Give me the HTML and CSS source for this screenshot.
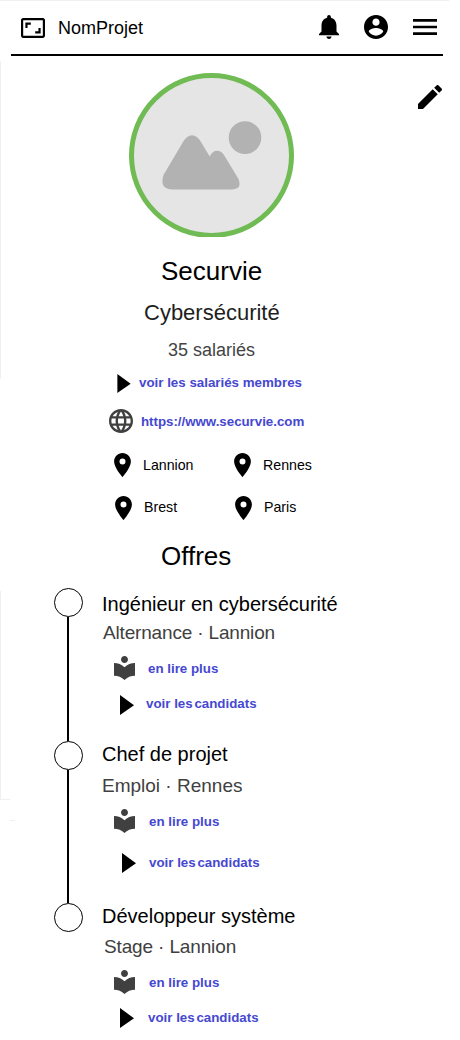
FILE: index.html
```html
<!DOCTYPE html>
<html lang="fr">
<head>
<meta charset="utf-8">
<title>NomProjet</title>
<link rel="stylesheet" href="styles.css">
</head>
<body>
<svg class="defs" width="0" height="0">
  <symbol id="pin" viewBox="5 2 14 20"><path d="M12 2C8.13 2 5 5.13 5 9c0 5.25 7 13 7 13s7-7.75 7-13c0-3.87-3.13-7-7-7zm0 9.500a2.500 2.500 0 0 1 0-5 2.500 2.500 0 0 1 0 5z"/></symbol>
  <symbol id="book" viewBox="3 2 18 20.550"><path d="M12 11.550C9.640 9.350 6.480 8 3 8v11c3.480 0 6.640 1.350 9 3.550 2.360-2.190 5.520-3.550 9-3.550V8c-3.480 0-6.640 1.350-9 3.550zM12 8c1.660 0 3-1.340 3-3s-1.340-3-3-3-3 1.340-3 3 1.340 3 3 3z"/></symbol>
  <symbol id="play" viewBox="0 0 14 20"><path d="M0 0L14 10.300 0 20z"/></symbol>
</svg>
<div class="page">
  <header class="topbar">
    <svg class="logo" viewBox="1 3 22 18" preserveAspectRatio="none"><path d="M19 12h-2v3h-3v2h5v-5zM7 9h3V7H5v5h2V9zm14-6H3c-1.100 0-2 .9-2 2v14c0 1.100.9 2 2 2h18c1.100 0 2-.9 2-2V5c0-1.100-.9-2-2-2zm0 16.010H3V4.990h18v14.020z"/></svg>
    <span class="brand">NomProjet</span>
    <svg class="bell" viewBox="4 2.500 16 19.500" preserveAspectRatio="none"><path d="M12 22c1.100 0 2-.9 2-2h-4c0 1.100.89 2 2 2zm6-6v-5c0-3.070-1.640-5.640-4.500-6.320V4c0-.83-.67-1.500-1.500-1.500s-1.500.67-1.500 1.500v.68C7.630 5.360 6 7.920 6 11v5l-2 2v1h16v-1l-2-2z"/></svg>
    <svg class="account" viewBox="2 2 20 20"><path d="M12 2C6.480 2 2 6.480 2 12s4.480 10 10 10 10-4.480 10-10S17.520 2 12 2zm0 3c1.660 0 3 1.340 3 3s-1.340 3-3 3-3-1.340-3-3 1.340-3 3-3zm0 14.200c-2.500 0-4.710-1.280-6-3.220.03-1.990 4-3.080 6-3.080 1.990 0 5.970 1.090 6 3.080-1.290 1.940-3.500 3.220-6 3.220z"/></svg>
    <svg class="menu" viewBox="3 6 18 12"><path d="M3 18h18v-2H3v2zm0-5h18v-2H3v2zm0-7v2h18V6H3z"/></svg>
  </header>

  <section class="hero">
    <svg class="avatar" viewBox="0 0 165 164">
      <circle cx="82.500" cy="82.500" r="80" fill="#e5e5e5" stroke="#70bb53" stroke-width="5"/>
      <circle cx="116" cy="64.600" r="16.300" fill="#b2b2b2"/>
      <path fill="#b2b2b2" d="M34.500 102L54 69Q58 62.300 63 62.300Q68 62.300 72 69L80.700 83.500Q83.500 77.800 88 77.800Q92 77.800 95 82L109.500 106Q113.500 116.500 102 116.500H44Q30 116.500 34.500 102z"/>
    </svg>
    <svg class="edit" viewBox="3 3 18 18"><path d="M3 17.250V21h3.750L17.810 9.940l-3.750-3.750L3 17.250zM20.710 7.040c.39-.39.39-1.020 0-1.410l-2.340-2.340c-.39-.39-1.020-.39-1.410 0l-1.830 1.830 3.750 3.750 1.830-1.830z"/></svg>
  </section>

  <section class="company">
    <h1 class="name">Securvie</h1>
    <p class="sector">Cybersécurité</p>
    <p class="staff">35 salariés</p>
    <div class="row members"><svg class="play"><use href="#play"/></svg><a class="link">voir les salariés membres</a></div>
    <div class="row site"><svg class="globe" viewBox="2 2 20 20"><path d="M11.990 2C6.470 2 2 6.480 2 12s4.470 10 9.990 10C17.520 22 22 17.520 22 12S17.520 2 11.990 2zm6.930 6h-2.950c-.32-1.250-.78-2.450-1.380-3.560 1.840.63 3.370 1.910 4.330 3.560zM12 4.040c.83 1.200 1.480 2.530 1.910 3.960h-3.820c.43-1.430 1.080-2.760 1.910-3.960zM4.260 14C4.100 13.360 4 12.690 4 12s.1-1.360.26-2h3.380c-.08.66-.14 1.320-.14 2 0 .68.06 1.340.14 2H4.260zm.82 2h2.950c.32 1.250.78 2.450 1.380 3.560-1.840-.63-3.370-1.900-4.330-3.560zm2.950-8H5.080c.96-1.660 2.490-2.930 4.330-3.560C8.810 5.550 8.350 6.750 8.030 8zM12 19.960c-.83-1.200-1.480-2.530-1.910-3.960h3.820c-.43 1.430-1.080 2.760-1.910 3.960zM14.340 14H9.660c-.09-.66-.16-1.320-.16-2 0-.68.07-1.350.16-2h4.680c.09.65.16 1.320.16 2 0 .68-.07 1.340-.16 2zm.25 5.560c.6-1.110 1.060-2.310 1.380-3.560h2.950c-.96 1.650-2.490 2.930-4.330 3.560zM16.360 14c.08-.66.14-1.320.14-2 0-.68-.06-1.340-.14-2h3.380c.16.64.26 1.310.26 2s-.1 1.360-.26 2h-3.380z"/></svg><a class="link url">https://www.securvie.com</a></div>
    <div class="cities">
      <div class="city"><svg class="pin"><use href="#pin"/></svg>Lannion</div>
      <div class="city"><svg class="pin"><use href="#pin"/></svg>Rennes</div>
    </div>
    <div class="cities second">
      <div class="city"><svg class="pin"><use href="#pin"/></svg>Brest</div>
      <div class="city"><svg class="pin"><use href="#pin"/></svg>Paris</div>
    </div>
    <h2 class="offers-title">Offres</h2>
  </section>

  <section class="timeline">
    <article class="offer first">
      <div class="rail"><i class="dot"></i><i class="line"></i></div>
      <div class="details">
        <h3 class="title">Ingénieur en cybersécurité</h3>
        <p class="meta">Alternance · Lannion</p>
        <div class="row read"><svg class="book"><use href="#book"/></svg><a class="link">en lire plus</a></div>
        <div class="row apply"><svg class="play"><use href="#play"/></svg><a class="link">voir les <span class="tight">candidats</span></a></div>
      </div>
    </article>
    <article class="offer middle">
      <div class="rail"><i class="dot"></i><i class="line"></i></div>
      <div class="details">
        <h3 class="title">Chef de projet</h3>
        <p class="meta">Emploi · Rennes</p>
        <div class="row read"><svg class="book"><use href="#book"/></svg><a class="link">en lire plus</a></div>
        <div class="row apply"><svg class="play"><use href="#play"/></svg><a class="link">voir les <span class="tight">candidats</span></a></div>
      </div>
    </article>
    <article class="offer last">
      <div class="rail"><i class="dot"></i></div>
      <div class="details">
        <h3 class="title">Développeur système</h3>
        <p class="meta">Stage · Lannion</p>
        <div class="row read"><svg class="book"><use href="#book"/></svg><a class="link">en lire plus</a></div>
        <div class="row apply"><svg class="play"><use href="#play"/></svg><a class="link">voir les <span class="tight">candidats</span></a></div>
      </div>
    </article>
  </section>
</div>
</body>
</html>
```

FILE: styles.css
```css
* { box-sizing: border-box; margin: 0; padding: 0; }
body { font-family: "Liberation Sans", Arial, sans-serif; background: #fff; color: #000; }
svg { display: block; flex: none; }
.defs { position: absolute; }
h1, h2, h3 { font-weight: 400; }

.page {
  width: 460px;
  height: 1040px;
  overflow: hidden;
  background:
    linear-gradient(#f0f0f0, #f0f0f0) 0 0 / 449px 1px no-repeat,
    linear-gradient(#f0f0f0, #f0f0f0) 0 61px / 1px 318px no-repeat,
    linear-gradient(#f0f0f0, #f0f0f0) 0 591px / 1px 208px no-repeat,
    linear-gradient(#f0f0f0, #f0f0f0) 0 799px / 10px 1px no-repeat,
    linear-gradient(#f0f0f0, #f0f0f0) 10px 820px / 5px 1px no-repeat,
    #fff;
}

.topbar { display: flex; align-items: center; width: 432px; height: 56px; margin-left: 11px; padding: 0 6px 0 10px; border-bottom: 2px solid #000; }
.logo { width: 24px; height: 20px; margin-top: 2px; }
.brand { flex: 1; margin-left: 13px; font-size: 18px; line-height: 24px; margin-top: 2px; }
.bell { width: 20px; height: 24px; }
.account { width: 24px; height: 24px; margin-left: 25px; }
.menu { width: 24px; height: 16px; margin-left: 25px; }

.hero { display: flex; justify-content: space-between; height: 195px; padding: 17px 18px 0 129px; }
.avatar { width: 165px; height: 164px; }
.edit { width: 24px; height: 24px; margin-top: 12px; }

.name { height: 40px; padding-left: 161px; font-size: 26px; line-height: 40px; }
.sector { height: 42px; padding-left: 144px; font-size: 22px; line-height: 44px; color: #1e1e1e; }
.staff { height: 33px; padding-left: 168px; font-size: 18px; line-height: 35px; color: #444; }

.row { display: flex; align-items: center; }
.link { font-size: 13.33px; font-weight: 700; line-height: 20px; color: #4648d0; white-space: nowrap; }
.play { width: 14px; height: 20px; }
.book { width: 21px; height: 24px; margin-bottom: 2px; fill: #404040; }
.tight { margin-left: -2px; }

.members { height: 34px; padding-left: 117px; gap: 8px; }
.members .play { height: 19px; }
.site { height: 43px; padding-left: 109px; gap: 8px; }
.globe { width: 24px; height: 24px; margin-bottom: 2px; fill: #404040; }
.url { letter-spacing: -0.03px; }

.cities { display: grid; grid-template-columns: 120px 120px; height: 43px; padding-left: 114px; }
.cities.second { height: 42px; padding-left: 115px; }
.second .pin { margin-top: 2px; }
.city { display: flex; align-items: center; gap: 12px; font-size: 14.2px; line-height: 20px; }
.pin { width: 17px; height: 24px; }
.offers-title { height: 56px; padding-left: 161px; font-size: 26px; line-height: 56px; }

.timeline { padding: 4px 0 0 54px; }
.offer { display: flex; gap: 19px; }
.rail { display: flex; flex-direction: column; width: 29px; }
.dot { width: 29px; height: 29px; border: 1px solid #000; border-radius: 50%; }
.line { flex: 1; width: 2px; margin-left: 13px; background: #000; }
.title { font-size: 20px; line-height: 26px; }
.meta { font-size: 19px; line-height: 35px; color: #404040; }
.read { padding-left: 12px; gap: 14px; }
.apply { padding-left: 18px; gap: 14px; }

.first { height: 153px; }
.first .title { line-height: 32px; }
.first .meta { line-height: 25px; padding-left: 1px; letter-spacing: -0.17px; }
.first .read { height: 47px; gap: 13px; }
.first .apply { height: 24px; gap: 12px; }
.first .play { margin-top: 2px; }

.middle { height: 162px; }
.middle .meta { line-height: 37px; }
.middle .read { height: 35px; }
.middle .apply { height: 48px; padding-left: 20px; gap: 13px; }

.last { height: 137px; }
.last .meta { padding-left: 2px; letter-spacing: -0.14px; }
.last .read { height: 37px; }
.last .apply { height: 34px; }
```
